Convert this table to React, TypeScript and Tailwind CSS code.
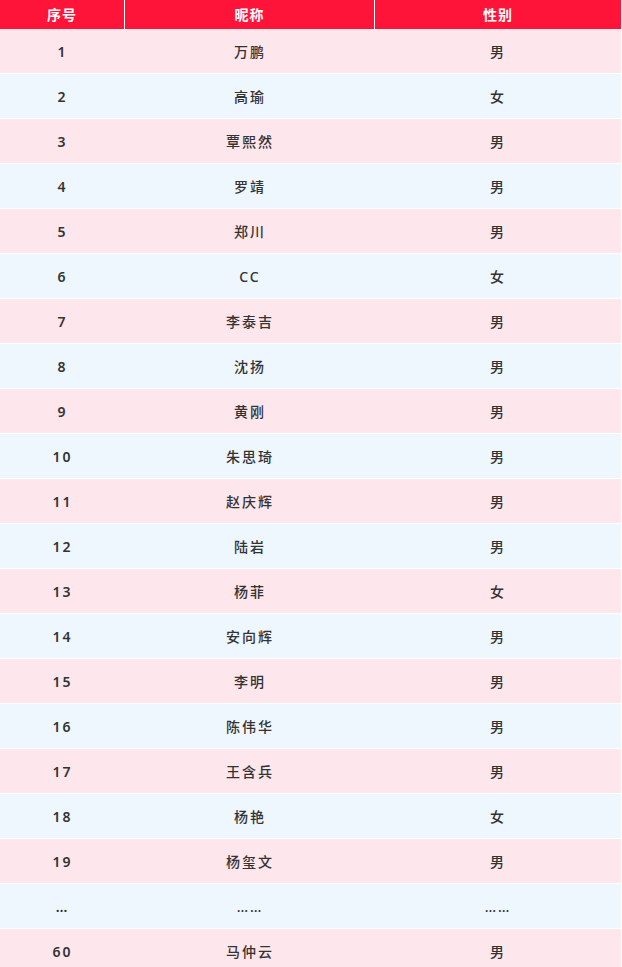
import React from 'react';

const rows: [string, string, string][] = [
  ['1', '万鹏', '男'],
  ['2', '高瑜', '女'],
  ['3', '覃熙然', '男'],
  ['4', '罗靖', '男'],
  ['5', '郑川', '男'],
  ['6', 'CC', '女'],
  ['7', '李泰吉', '男'],
  ['8', '沈扬', '男'],
  ['9', '黄刚', '男'],
  ['10', '朱思琦', '男'],
  ['11', '赵庆辉', '男'],
  ['12', '陆岩', '男'],
  ['13', '杨菲', '女'],
  ['14', '安向辉', '男'],
  ['15', '李明', '男'],
  ['16', '陈伟华', '男'],
  ['17', '王含兵', '男'],
  ['18', '杨艳', '女'],
  ['19', '杨玺文', '男'],
  ['…', '……', '……'],
  ['60', '马仲云', '男'],
];

export default function App() {
  return (
    <div className="w-[622px] h-[967px] overflow-hidden bg-white font-['Noto_Sans','Noto_Sans_CJK_SC',sans-serif] text-[14px]">
      <div className="w-[621px]">
        {/* header */}
        <div className="grid grid-cols-[125px_250px_1fr] h-[29px] bg-[#ff1439] text-white font-bold tracking-[1px]">
          <div className="flex items-center justify-center border-r border-white">序号</div>
          <div className="flex items-center justify-center border-r border-white">昵称</div>
          <div className="flex items-center justify-center">性别</div>
        </div>
        {rows.map((r, i) => (
          <div
            key={i}
            className={
              'grid grid-cols-[125px_250px_1fr] h-[45px] border-b border-white text-[#333] tracking-[2px] ' +
              (i % 2 === 0 ? 'bg-[#fde6ec]' : 'bg-[#eef6fe]')
            }
          >
            <div className="flex items-center justify-center font-semibold">{r[0]}</div>
            <div className="flex items-center justify-center font-medium">{r[1]}</div>
            <div className="flex items-center justify-center font-medium">{r[2]}</div>
          </div>
        ))}
      </div>
    </div>
  );
}
